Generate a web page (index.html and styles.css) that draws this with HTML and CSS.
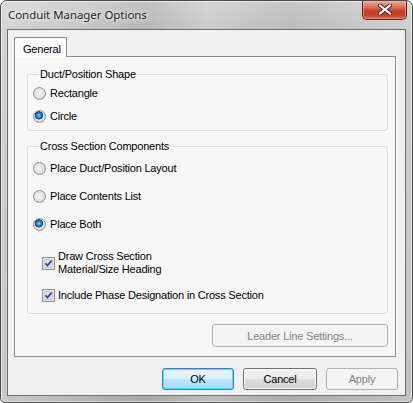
FILE: index.html
```html
<!DOCTYPE html>
<html>
<head>
<meta charset="utf-8">
<link rel="stylesheet" href="styles.css">
</head>
<body>
<div class="window">
  <div class="titlebar">
    <span class="title">Conduit Manager Options</span>
    <div class="close-btn">
      <svg width="14" height="11" viewBox="0 0 14 11"><path d="M2 1.5 L12 9.5 M12 1.5 L2 9.5" stroke="#3a1a14" stroke-width="4" stroke-linecap="square"/><path d="M2 1.5 L12 9.5 M12 1.5 L2 9.5" stroke="#ffffff" stroke-width="2.2" stroke-linecap="square"/></svg>
    </div>
  </div>
  <div class="client">
    <div class="tabstrip">
      <div class="tab">General</div>
    </div>
    <div class="panel">
      <fieldset class="group g1">
        <legend>Duct/Position Shape</legend>
        <div class="row"><span class="radio"></span><span class="lbl">Rectangle</span></div>
        <div class="row r-gap7"><span class="radio checked"></span><span class="lbl">Circle</span></div>
      </fieldset>
      <fieldset class="group g2">
        <legend>Cross Section Components</legend>
        <div class="row"><span class="radio"></span><span class="lbl">Place Duct/Position Layout</span></div>
        <div class="row r-gap12"><span class="radio"></span><span class="lbl">Place Contents List</span></div>
        <div class="row r-gap12"><span class="radio checked"></span><span class="lbl">Place Both</span></div>
        <div class="row chk-row two-line r-gap18"><span class="check"><svg width="13" height="13" viewBox="0 0 13 13"><rect x="0.5" y="0.5" width="12" height="12" fill="#e6e8ec" stroke="#8e8f8f"/><rect x="2.5" y="2.5" width="8" height="8" fill="#d9dde6" stroke="#c3c8d2"/><path d="M3.5 6.2 L5.4 8.6 L9.6 3.6" fill="none" stroke="#3c4f88" stroke-width="1.7"/></svg></span><span class="lbl">Draw Cross Section<br>Material/Size Heading</span></div>
        <div class="row chk-row r-gap11"><span class="check"><svg width="13" height="13" viewBox="0 0 13 13"><rect x="0.5" y="0.5" width="12" height="12" fill="#e6e8ec" stroke="#8e8f8f"/><rect x="2.5" y="2.5" width="8" height="8" fill="#d9dde6" stroke="#c3c8d2"/><path d="M3.5 6.2 L5.4 8.6 L9.6 3.6" fill="none" stroke="#3c4f88" stroke-width="1.7"/></svg></span><span class="lbl">Include Phase Designation in Cross Section</span></div>
      </fieldset>
      <div class="leader-wrap">
        <button class="btn disabled leader">Leader Line Settings...</button>
      </div>
    </div>
    <div class="buttons">
      <button class="btn default ok">OK</button>
      <button class="btn cancel">Cancel</button>
      <button class="btn disabled apply">Apply</button>
    </div>
  </div>
</div>
</body>
</html>
```
FILE: styles.css
```css
html, body {
  margin: 0;
  padding: 0;
  background: #ffffff;
}
body {
  font-family: "Liberation Sans", Arial, sans-serif;
  font-size: 11px;
  letter-spacing: -0.2px;
  color: #000;
}
.window {
  width: 413px;
  height: 403px;
  box-sizing: border-box;
  border: 1px solid #4b4b4b;
  border-radius: 7px 7px 5px 5px;
  padding: 0 6px 6px 6px;
  display: flex;
  flex-direction: column;
  background:
    linear-gradient(90deg, rgba(255,255,255,0.25) 0%, rgba(0,0,0,0.0) 20%, rgba(0,0,0,0.08) 35%, rgba(255,255,255,0.1) 50%, rgba(0,0,0,0.05) 70%, rgba(255,255,255,0.15) 100%),
    linear-gradient(180deg, #d2d2d2 0%, #c4c4c4 8%, #bdbdbd 60%, #b6b6b6 100%);
  box-shadow: inset 0 0 0 1px rgba(255,255,255,0.55);
}
.titlebar {
  height: 28px;
  display: flex;
  align-items: flex-start;
  justify-content: space-between;
}
.title {
  font-family: "Noto Sans", "Liberation Sans", sans-serif;
  font-size: 11.4px;
  letter-spacing: 0;
  color: #1a1a1a;
  margin-top: 6px;
  margin-left: 1px;
  text-shadow: 0 0 6px rgba(255,255,255,0.9), 0 0 3px rgba(255,255,255,0.9);
}
.close-btn {
  width: 45px;
  height: 19px;
  margin-right: -1px;
  box-sizing: border-box;
  border: 1px solid #5b241b;
  border-top: none;
  border-radius: 0 0 5px 5px;
  background: linear-gradient(180deg, #e7a796 0%, #d9715c 35%, #c74228 55%, #c4432b 80%, #d8705a 100%);
  box-shadow: inset 0 0 0 1px rgba(255,200,190,0.45);
  display: flex;
  align-items: center;
  justify-content: center;
}
.close-btn svg { display: block; margin-top: -1px; }
.client {
  flex: 1;
  box-sizing: border-box;
  border: 1px solid #6e6e6e;
  background: #f0f0f0;
  padding: 7px 8px 5px 6px;
  display: flex;
  flex-direction: column;
}
.tabstrip {
  display: flex;
}
.tab {
  position: relative;
  z-index: 1;
  height: 20px;
  box-sizing: border-box;
  margin-bottom: -1px;
  padding: 5px 0 0 8px;
  width: 53px;
  border: 1px solid #898c95;
  border-bottom: none;
  border-radius: 2px 2px 0 0;
  background: #fcfcfc;
  line-height: 13px;
}
.panel {
  width: 382px;
  height: 301px;
  box-sizing: border-box;
  border: 1px solid #898c95;
  background: #f7f7f7;
  box-shadow: 1px 0 0 #ffffff;
  display: flex;
  flex-direction: column;
  padding: 0 7px 0 12px;
}
.group {
  margin: 0;
  padding: 0 0 0 5px;
  border: 1px solid #d5dfe5;
  border-radius: 3px;
  box-shadow: inset 1px 1px 0 #ffffff, 1px 1px 0 #ffffff;
  display: flex;
  flex-direction: column;
  min-width: 0;
}
.group legend {
  padding: 0 1px;
  margin-left: 6px;
  line-height: 12px;
  color: #000;
}
.g1 {
  margin-top: 11px;
  padding-top: 5px;
  padding-bottom: 6px;
}
.g2 {
  margin-top: 9px;
  padding-top: 8px;
  padding-bottom: 10px;
}
.row {
  display: flex;
  align-items: center;
  height: 16px;
}
.r-gap7 { margin-top: 7px; }
.r-gap11 { margin-top: 11px; }
.r-gap12 { margin-top: 12px; }
.r-gap18 { margin-top: 18px; }
.two-line { height: 26px; }
.lbl {
  line-height: 13px;
}
.radio {
  width: 13px;
  height: 13px;
  box-sizing: border-box;
  border-radius: 50%;
  border: 1px solid #8e8f8f;
  background: radial-gradient(circle at 45% 45%, #f6f6f6 0%, #e4e4e4 45%, #cbcbcb 100%);
  margin-right: 4px;
  flex: none;
}
.radio.checked {
  background:
    radial-gradient(circle at 45% 40%, #8fe0fb 0px, #37a3e0 1.5px, #14589f 3.2px, #1a3f73 3.9px, rgba(0,0,0,0) 4.3px),
    radial-gradient(circle at 45% 45%, #f6f6f6 0%, #e4e4e4 45%, #cbcbcb 100%);
}
.chk-row {
  padding-left: 9px;
}
.check {
  width: 13px;
  height: 13px;
  margin-right: 3px;
  flex: none;
}
.check svg { display: block; }
.leader-wrap {
  display: flex;
  justify-content: flex-end;
  margin-top: 10px;
}
.btn {
  font-family: "Liberation Sans", Arial, sans-serif;
  font-size: 11px;
  letter-spacing: -0.2px;
  height: 22px;
  box-sizing: border-box;
  border-radius: 3px;
  padding: 0;
  margin: 0;
  color: #000;
  border: 1px solid #707070;
  background: linear-gradient(180deg, #f2f2f2 0%, #ebebeb 49%, #dddddd 50%, #cfcfcf 100%);
  box-shadow: inset 0 0 0 1px rgba(255,255,255,0.8);
}
.btn.disabled {
  color: #838383;
  border-color: #adb2b5;
  background: #f4f4f4;
  box-shadow: none;
}
.leader {
  width: 176px;
  height: 23px;
}
.btn.default {
  border-color: #3c7fb1;
  background: linear-gradient(180deg, #eaf6fd 0%, #d9f0fc 49%, #bee6fd 50%, #a7d9f5 100%);
  box-shadow: inset 0 0 0 1px #48e0ff;
}
.buttons {
  margin-top: 11px;
  display: flex;
  justify-content: flex-end;
  gap: 9px;
  margin-right: -1px;
}
.ok { width: 72px; }
.cancel { width: 74px; }
.apply { width: 72px; }
```
